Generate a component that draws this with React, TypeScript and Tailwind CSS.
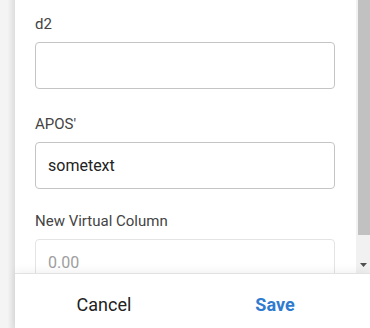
import { useState } from "react";

function Field({
  label,
  value,
  placeholder,
  disabled,
  className,
}: {
  label: string;
  value?: string;
  placeholder?: string;
  disabled?: boolean;
  className?: string;
}) {
  const [val, setVal] = useState(value ?? "");
  return (
    <div className={className}>
      <label className="block text-[15px] leading-5 text-[#444] mb-2">{label}</label>
      <input
        className={`block w-[300px] h-[47px] rounded-[4px] border bg-white px-3 text-[16px] text-[#222] placeholder-[#9e9e9e] outline-none ${
          disabled ? "border-[#e4e4e4]" : "border-[#c4c4c4]"
        }`}
        value={val}
        placeholder={placeholder}
        disabled={disabled}
        onChange={(e) => setVal(e.target.value)}
      />
    </div>
  );
}

export default function App() {
  return (
    <div className="flex w-[370px] h-[328px] overflow-hidden bg-white font-['Roboto',sans-serif]">
      <div className="w-[15px] shrink-0 bg-gradient-to-r from-[#f4f4f4] from-50% to-[#dedede]" />

      <div className="flex flex-1 flex-col">
        <div className="flex h-[273px] shrink-0 overflow-hidden">
          <div className="flex-1 pl-5 pt-[14px]">
            <Field label="d2" className="mb-[25px]" />
            <Field label="APOS'" value="sometext" className="mb-[22px]" />
            <Field label="New Virtual Column" placeholder="0.00" disabled />
          </div>

          <div className="flex w-[14px] shrink-0 flex-col bg-[#f1f1f1]">
            <div className="ml-[2px] h-[235px] bg-[#c1c1c1]" />
            <div className="flex flex-1 items-end justify-center pb-[6px]">
              <svg width="7" height="4" viewBox="0 0 7 4" className="ml-[1px]">
                <path d="M0 0 L7 0 L3.5 4 Z" fill="#505050" />
              </svg>
            </div>
          </div>
        </div>

        <div className="relative flex flex-1 items-center border-t border-[#e2e2e2] pt-[6px] shadow-[0_-3px_8px_rgba(0,0,0,0.05)]">
          <button className="w-[178px] text-center text-[18px] text-[#222]">Cancel</button>
          <button className="w-[164px] text-center text-[18px] font-bold text-[#2f7bd0]">Save</button>
        </div>
      </div>
    </div>
  );
}
